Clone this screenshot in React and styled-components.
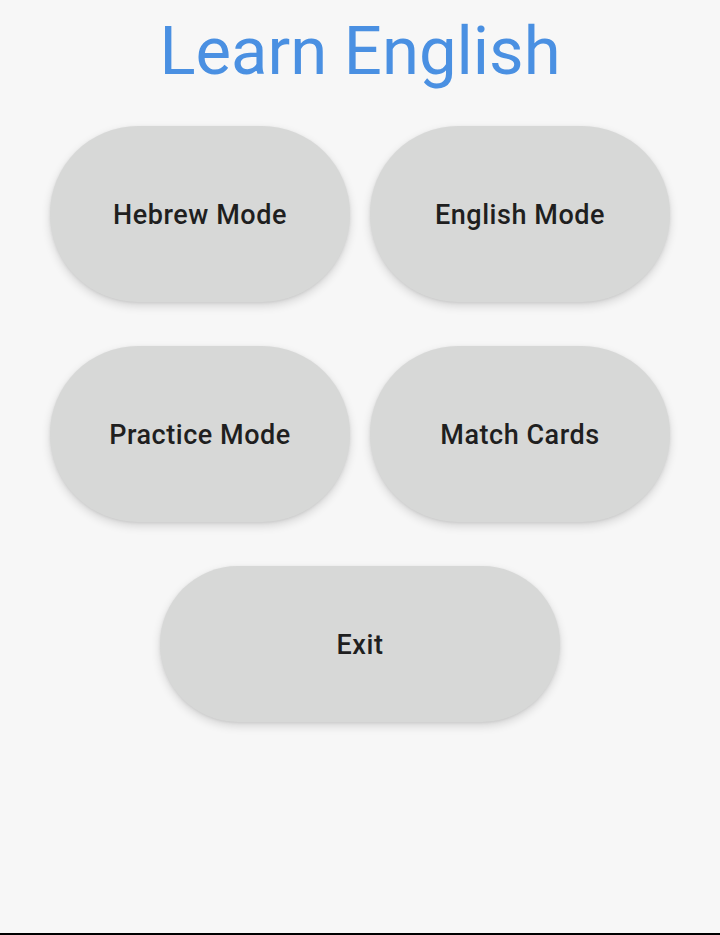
import React from 'react';
import styled, { createGlobalStyle } from 'styled-components';

const GlobalStyle = createGlobalStyle`
    html, body {
        margin: 0;
        padding: 0;
        background: #f7f7f7;
    }
    body {
        font-family: Roboto, "Noto Sans", sans-serif;
    }
`;

const Screen = styled.div`
    height: 935px;
    box-sizing: border-box;
    border-bottom: 2px solid #000;
    display: flex;
    flex-direction: column;
    align-items: center;
`;

const Title = styled.h1`
    margin: 11px 0 0;
    font-size: 67px;
    font-weight: 400;
    line-height: 80px;
    color: #4a90e2;
`;

const Grid = styled.div`
    margin-top: 35px;
    display: grid;
    grid-template-columns: 300px 300px;
    column-gap: 20px;
    row-gap: 44px;
`;

const ModeButton = styled.button`
    width: ${p => p.wide ? '400px' : '300px'};
    height: ${p => p.wide ? '156px' : '176px'};
    padding: 2px 0 0;
    border: none;
    border-radius: 90px;
    background: #d7d8d7;
    color: #1f1f1f;
    font-family: Roboto, sans-serif;
    font-size: 27px;
    font-weight: 500;
    letter-spacing: 0.02em;
    box-shadow: 0 4px 10px rgba(0, 0, 0, 0.14), 0 1px 3px rgba(0, 0, 0, 0.08);
    cursor: pointer;
`;

const ExitRow = styled.div`
    margin-top: 44px;
`;

const modes = ['Hebrew Mode', 'English Mode', 'Practice Mode', 'Match Cards'];

const App = () => (
    <>
        <GlobalStyle />
        <Screen>
            <Title>Learn English</Title>
            <Grid>
                {modes.map(m => (
                    <ModeButton key={m}>{m}</ModeButton>
                ))}
            </Grid>
            <ExitRow>
                <ModeButton wide>Exit</ModeButton>
            </ExitRow>
        </Screen>
    </>
);

export default App;
